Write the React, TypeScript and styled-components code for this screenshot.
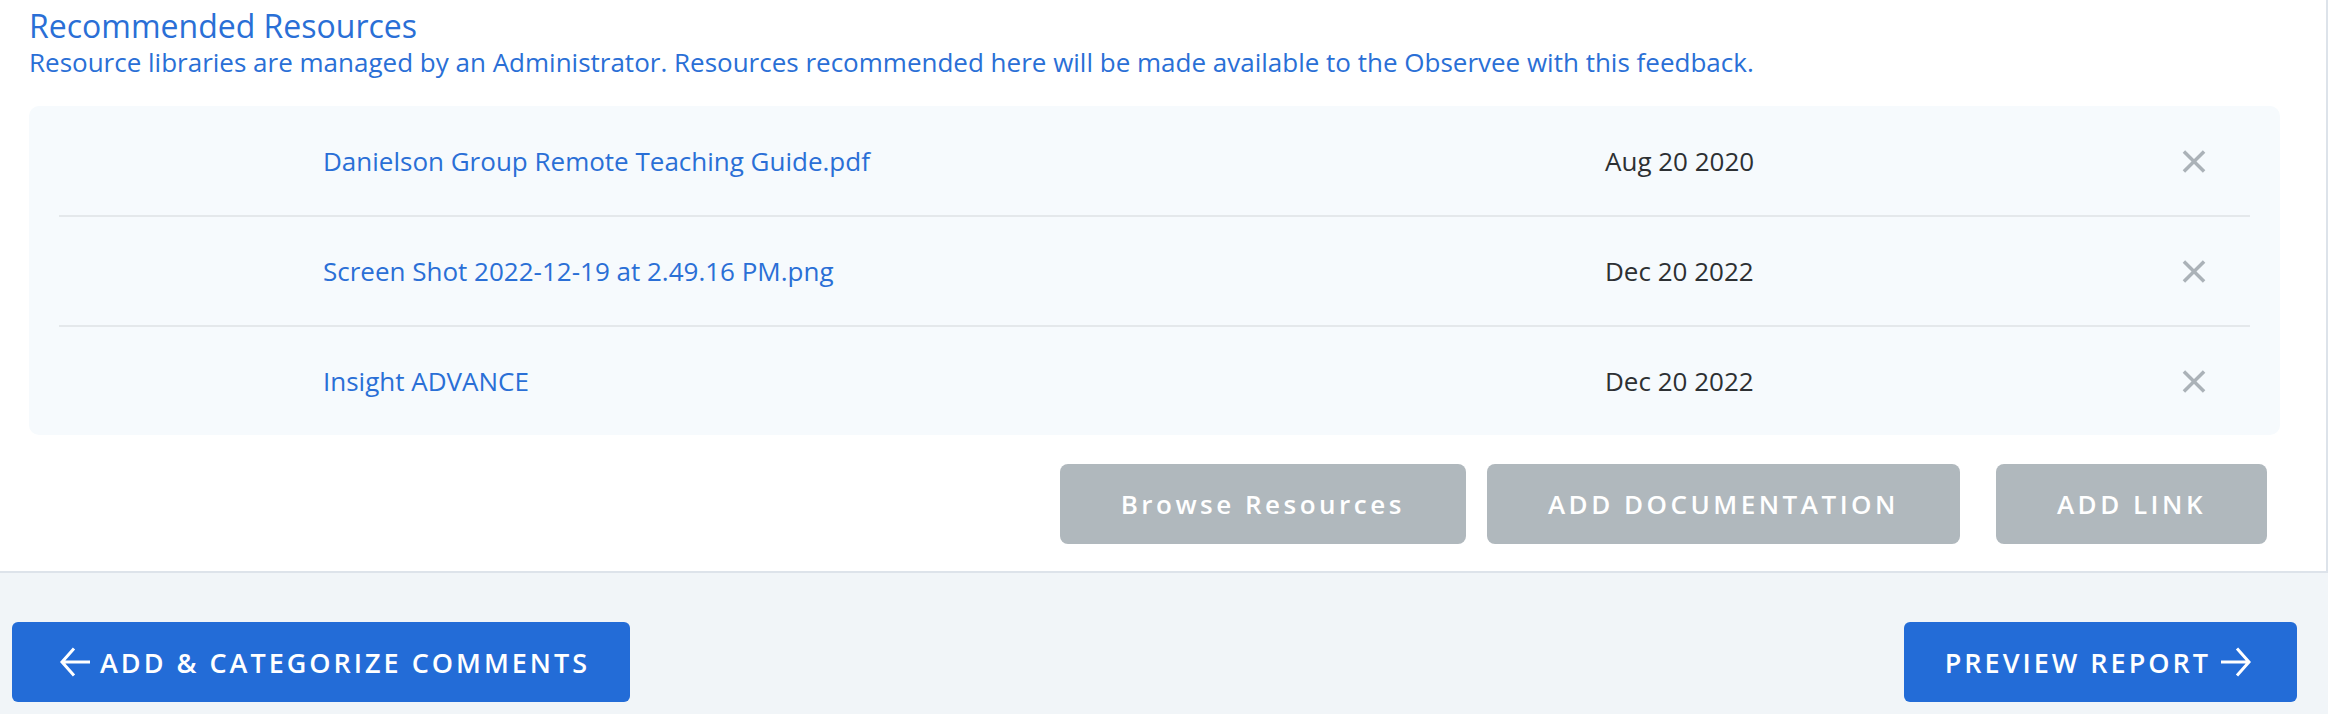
import React from 'react';
import styled, { createGlobalStyle, css } from 'styled-components';

const GlobalStyle = createGlobalStyle`
    body {
        margin: 0;
        background: #f1f5f8;
        font-family: "Open Sans", "Noto Sans", sans-serif;
    }
`;

const Panel = styled.section`
    background: #ffffff;
    border-right: 2px solid #dde3ea;
    border-bottom: 2px solid #dde3ea;
    padding: 5px 46px 27px 29px;
`;

const Title = styled.h2`
    margin: 0;
    font-size: 32px;
    font-weight: 400;
    line-height: 41px;
    color: #2a6fd6;
`;

const Subtitle = styled.p`
    margin: 0;
    font-size: 26px;
    line-height: 32px;
    color: #2a6fd6;
`;

const ResourceBox = styled.div`
    margin-top: 28px;
    background: #f6fafd;
    border-radius: 10px;
    padding: 1px 30px 0;
`;

const Row = styled.div`
    display: grid;
    grid-template-columns: 264px 1fr 577px 24px;
    align-items: center;
    height: 108px;
    padding-right: 44px;
    border-bottom: 2px solid #e4e8eb;
    &:last-child {
        border-bottom: none;
    }
`;

const FileName = styled.a`
    grid-column: 2;
    font-size: 26px;
    color: #2a6fd6;
    text-decoration: none;
    cursor: pointer;
`;

const DateText = styled.span`
    font-size: 26px;
    color: #2d3033;
`;

const RemoveButton = styled.button`
    display: flex;
    padding: 0;
    border: none;
    background: none;
    cursor: pointer;
`;

const Actions = styled.div`
    display: flex;
    justify-content: flex-end;
    margin-top: 29px;
    padding-right: 13px;
`;

const GrayButton = styled.button<{ spaced?: boolean }>`
    height: 80px;
    padding: 0 61px;
    margin-left: 21px;
    border: none;
    border-radius: 8px;
    background: #b0b8bd;
    color: #ffffff;
    font-family: inherit;
    font-size: 26px;
    font-weight: 600;
    letter-spacing: 3.5px;
    cursor: pointer;
    ${props =>
        props.spaced &&
        css`
            margin-left: 36px;
        `}
`;

const Footer = styled.footer`
    display: flex;
    justify-content: space-between;
    padding: 49px 31px 12px 12px;
`;

const NavButton = styled.button<{ dir: 'back' | 'next' }>`
    display: flex;
    align-items: center;
    gap: 9px;
    height: 80px;
    border: none;
    border-radius: 6px;
    background: #236cd7;
    color: #ffffff;
    font-family: inherit;
    font-size: 27px;
    font-weight: 600;
    letter-spacing: 3px;
    cursor: pointer;
    ${props =>
        props.dir === 'back'
            ? css`
                  padding: 0 40px 0 47px;
              `
            : css`
                  padding: 0 45px 0 41px;
              `}
`;

const CloseIcon = () => (
    <svg width="25" height="25" viewBox="0 0 25 25">
        <path d="M2 2 L23 23 M23 2 L2 23" stroke="#abb2b8" strokeWidth="3.6" fill="none" />
    </svg>
);

const Arrow = ({ flip }: { flip?: boolean }) => (
    <svg
        width="32"
        height="30"
        viewBox="0 0 32 30"
        style={flip ? { transform: 'scaleX(-1)' } : undefined}
    >
        <path
            d="M15 1.5 L3 15 L15 28.5 M3 15 H31"
            stroke="#ffffff"
            strokeWidth="3"
            fill="none"
        />
    </svg>
);

const resources = [
    { name: 'Danielson Group Remote Teaching Guide.pdf', date: 'Aug 20 2020' },
    { name: 'Screen Shot 2022-12-19 at 2.49.16 PM.png', date: 'Dec 20 2022' },
    { name: 'Insight ADVANCE', date: 'Dec 20 2022' },
];

const App = () => {
    return (
        <>
            <GlobalStyle />
            <Panel>
                <Title>Recommended Resources</Title>
                <Subtitle>
                    Resource libraries are managed by an Administrator. Resources recommended here will be made
                    available to the Observee with this feedback.
                </Subtitle>
                <ResourceBox>
                    {resources.map(item => (
                        <Row key={item.name}>
                            <FileName>{item.name}</FileName>
                            <DateText>{item.date}</DateText>
                            <RemoveButton aria-label="Remove">
                                <CloseIcon />
                            </RemoveButton>
                        </Row>
                    ))}
                </ResourceBox>
                <Actions>
                    <GrayButton>Browse Resources</GrayButton>
                    <GrayButton>ADD DOCUMENTATION</GrayButton>
                    <GrayButton spaced>ADD LINK</GrayButton>
                </Actions>
            </Panel>
            <Footer>
                <NavButton dir="back">
                    <Arrow />
                    ADD &amp; CATEGORIZE COMMENTS
                </NavButton>
                <NavButton dir="next">
                    PREVIEW REPORT
                    <Arrow flip />
                </NavButton>
            </Footer>
        </>
    );
};

export default App;
